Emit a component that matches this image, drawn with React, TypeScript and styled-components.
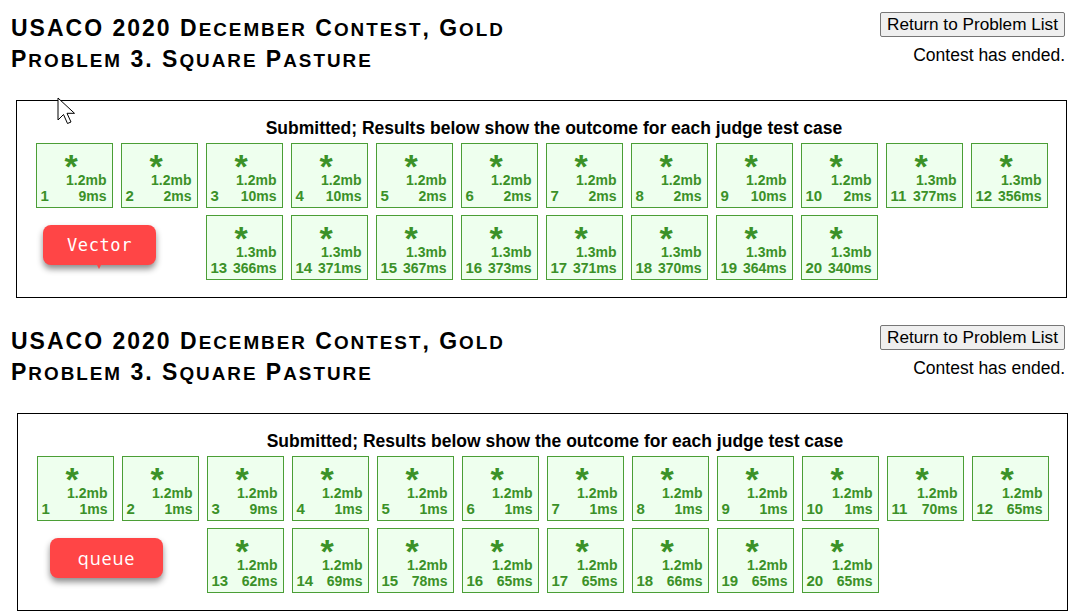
import React from "react";
import styled, { createGlobalStyle } from "styled-components";

const GlobalStyle = createGlobalStyle`
  html, body {
    margin: 0;
    padding: 0;
    background: #fff;
  }
  body {
    font-family: "Liberation Sans", Arial, sans-serif;
    color: #000;
  }
`;

const Page = styled.div`
  position: relative;
  width: 1078px;
  height: 616px;
  overflow: hidden;
  display: flex;
  flex-direction: column;
  gap: 15px;
`;

const Section = styled.section`
  display: flex;
  flex-direction: column;
`;

const Header = styled.div`
  display: flex;
  justify-content: space-between;
  align-items: flex-start;
  height: 72px;
`;

const Title = styled.h2`
  margin: 14px 0 0 11px;
  font-size: 23px;
  line-height: 28.5px;
  font-weight: bold;
  letter-spacing: 2px;
`;

const Small = styled.span`
  font-size: 0.82em;
  text-transform: uppercase;
`;

const Side = styled.div`
  display: flex;
  flex-direction: column;
  align-items: flex-end;
  padding: 12px 13px 0 0;
  gap: 8px;
`;

const ReturnButton = styled.button`
  font-family: "Liberation Sans", Arial, sans-serif;
  font-size: 17.2px;
  line-height: 19px;
  height: 25px;
  padding: 2px 6px;
  color: #000;
  background: #efefef;
  border: 1px solid #767676;
  border-radius: 2px;
`;

const Status = styled.div`
  font-size: 17.5px;
  line-height: 20px;
`;

const ResultBox = styled.div<{ $shift: number }>`
  position: relative;
  margin: 28px ${(p) => 11 - p.$shift}px 0 ${(p) => 16 + p.$shift}px;
  border: 1px solid #000;
  padding: 18px 0 17px;
  display: flex;
  flex-direction: column;
  align-items: center;
`;

const Summary = styled.div`
  font-size: 17.5px;
  line-height: 18px;
  font-weight: bold;
  margin: 0 0 6px 25px;
`;

const Grid = styled.div`
  width: 1012px;
  display: flex;
  flex-wrap: wrap;
  justify-content: center;
  column-gap: 8px;
  row-gap: 7px;
`;

const Tile = styled.div`
  box-sizing: border-box;
  width: 77px;
  height: 65px;
  padding: 0 5px 0 4px;
  background: #efe;
  border: 1px solid #4b9e36;
  color: #3b9128;
  font-weight: bold;
  display: flex;
  flex-direction: column;
`;

const Star = styled.div`
  box-sizing: border-box;
  height: 28px;
  padding: 7px 5px 0 0;
  font-size: 34px;
  line-height: 30px;
  text-align: center;
`;

const Line = styled.div`
  display: flex;
  justify-content: space-between;
  align-items: baseline;
  font-size: 14px;
  line-height: 16px;
`;

const Memory = styled(Line)`
  justify-content: flex-end;
`;

const CaseNo = styled.span`
  font-size: 15px;
`;

const Badge = styled.div<{ $left: number; $mono?: boolean; $tail?: boolean }>`
  position: absolute;
  left: ${(p) => p.$left}px;
  top: 124px;
  width: 113px;
  height: 40px;
  border-radius: 8px;
  background: #ff4546;
  box-shadow: 0 4px 6px rgba(0, 0, 0, 0.45);
  color: #fff;
  display: flex;
  align-items: center;
  justify-content: center;
  font-family: ${(p) =>
    p.$mono ? '"DejaVu Sans Mono", "Liberation Mono", monospace' : '"Open Sans", sans-serif'};
  font-size: ${(p) => (p.$mono ? "17px" : "18px")};
  letter-spacing: ${(p) => (p.$mono ? "0.6px" : "0.8px")};

  &::after {
    content: "";
    display: ${(p) => (p.$tail ? "block" : "none")};
    position: absolute;
    left: 54px;
    top: 40px;
    border-left: 2px solid transparent;
    border-right: 2px solid transparent;
    border-top: 4px solid #ff4546;
  }
`;

const Cursor = styled.svg`
  position: absolute;
  left: 57px;
  top: 97px;
`;

type Result = [string, number];

const fast: Result[] = [
  ["1.2mb", 9], ["1.2mb", 2], ["1.2mb", 10], ["1.2mb", 10], ["1.2mb", 2],
  ["1.2mb", 2], ["1.2mb", 2], ["1.2mb", 2], ["1.2mb", 10], ["1.2mb", 2],
  ["1.3mb", 377], ["1.3mb", 356], ["1.3mb", 366], ["1.3mb", 371], ["1.3mb", 367],
  ["1.3mb", 373], ["1.3mb", 371], ["1.3mb", 370], ["1.3mb", 364], ["1.3mb", 340],
];

const queue: Result[] = [1, 1, 9, 1, 1, 1, 1, 1, 1, 1, 70, 65, 62, 69, 78, 65, 65, 66, 65, 65].map(
  (t) => ["1.2mb", t] as Result
);

const Block = ({
  results,
  label,
  mono,
  tail,
  shift,
  badgeLeft,
}: {
  results: Result[];
  label: string;
  mono?: boolean;
  tail?: boolean;
  shift: number;
  badgeLeft: number;
}) => (
  <Section>
    <Header>
      <Title>
        USACO 2020 D<Small>ecember</Small> C<Small>ontest</Small>, G<Small>old</Small>
        <br />
        P<Small>roblem</Small> 3. S<Small>quare</Small> P<Small>asture</Small>
      </Title>
      <Side>
        <ReturnButton>Return to Problem List</ReturnButton>
        <Status>Contest has ended.</Status>
      </Side>
    </Header>
    <ResultBox $shift={shift}>
      <Summary>Submitted; Results below show the outcome for each judge test case</Summary>
      <Grid>
        {results.map(([mem, ms], i) => (
          <Tile key={i}>
            <Star>*</Star>
            <Memory>{mem}</Memory>
            <Line>
              <CaseNo>{i + 1}</CaseNo>
              <span>{ms}ms</span>
            </Line>
          </Tile>
        ))}
      </Grid>
      <Badge $left={badgeLeft} $mono={mono} $tail={tail}>
        {label}
      </Badge>
    </ResultBox>
  </Section>
);

export default function App() {
  return (
    <Page>
      <GlobalStyle />
      <Block results={fast} label="Vector" mono tail shift={0} badgeLeft={26} />
      <Block results={queue} label="queue" shift={1} badgeLeft={32} />
      <Cursor width="19" height="28" viewBox="0 0 19 28">
        <path
          d="M1 1 L1 23 L6.5 17.5 L10.5 26.5 L14 25 L10 16.3 L17.5 16.3 Z"
          fill="#fff"
          stroke="#000"
          strokeWidth="1"
          strokeLinejoin="miter"
        />
      </Cursor>
    </Page>
  );
}
